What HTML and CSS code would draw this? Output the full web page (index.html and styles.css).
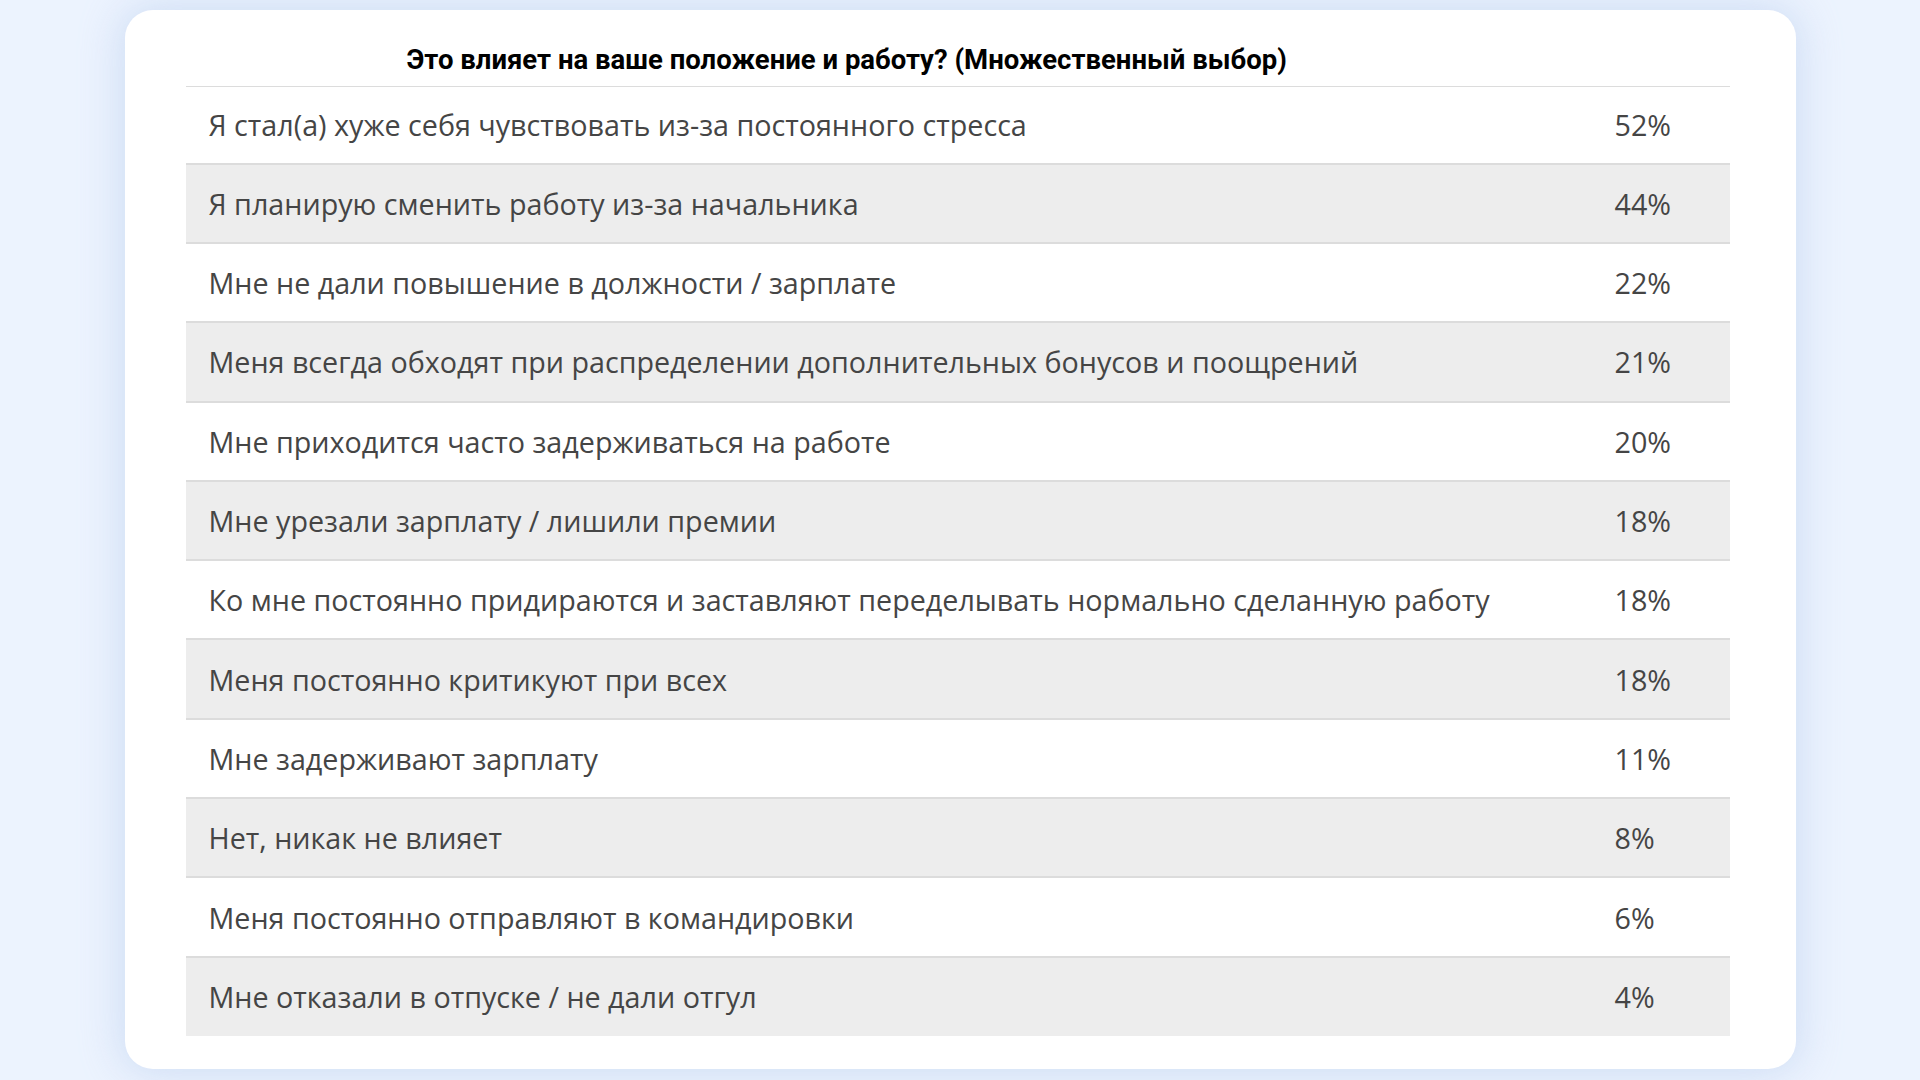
FILE: index.html
```html
<!DOCTYPE html>
<html lang="ru">
<head>
  <meta charset="UTF-8">
  <title>Опрос: влияние на работу</title>
  <link rel="stylesheet" href="styles.css">
</head>
<body>
  <div class="card">
    <table class="survey">
      <colgroup>
        <col class="col-label">
        <col class="col-pct">
      </colgroup>
      <thead>
        <tr>
          <th colspan="2">Это влияет на ваше положение и работу? (Множественный выбор)</th>
        </tr>
      </thead>
      <tbody>
        <tr><td>Я стал(а) хуже себя чувствовать из-за постоянного стресса</td><td>52%</td></tr>
        <tr><td>Я планирую сменить работу из-за начальника</td><td>44%</td></tr>
        <tr><td>Мне не дали повышение в должности / зарплате</td><td>22%</td></tr>
        <tr><td>Меня всегда обходят при распределении дополнительных бонусов и поощрений</td><td>21%</td></tr>
        <tr><td>Мне приходится часто задерживаться на работе</td><td>20%</td></tr>
        <tr><td>Мне урезали зарплату / лишили премии</td><td>18%</td></tr>
        <tr><td>Ко мне постоянно придираются и заставляют переделывать нормально сделанную работу</td><td>18%</td></tr>
        <tr><td>Меня постоянно критикуют при всех</td><td>18%</td></tr>
        <tr><td>Мне задерживают зарплату</td><td>11%</td></tr>
        <tr><td>Нет, никак не влияет</td><td>8%</td></tr>
        <tr><td>Меня постоянно отправляют в командировки</td><td>6%</td></tr>
        <tr><td>Мне отказали в отпуске / не дали отгул</td><td>4%</td></tr>
      </tbody>
    </table>
  </div>
</body>
</html>
```

FILE: styles.css
```css
:root {
  --bg: #ecf3fe;
  --row-alt: #ededed;
  --line: #dcdcdc;
  --text: #454545;
}
html, body { margin: 0; height: 100%; }
body {
  background: var(--bg);
  display: flex;
  justify-content: center;
  align-items: flex-start;
  padding-top: 10px;
  box-sizing: border-box;
  font-family: 'Open Sans', 'Noto Sans', sans-serif;
}
.card {
  width: 1671px;
  height: 1059px;
  box-sizing: border-box;
  background: #fff;
  border-radius: 28px;
  padding: 34px 66px 0 61px;
  box-shadow: 0 0 40px 4px rgba(170, 195, 232, 0.45);
}
.survey {
  width: 1544px;
  border-collapse: collapse;
  table-layout: fixed;
}
.col-label { width: 1406px; }
.col-pct { width: 138px; }
.survey th {
  font-family: Roboto, 'Liberation Sans', sans-serif;
  font-weight: 700;
  font-size: 27.5px;
  color: #000;
  text-align: left;
  padding: 0 0 10px 221px;
  line-height: 32px;
  border-bottom: 1px solid var(--line);
}
.survey td {
  height: 77.2px;
  box-sizing: border-box;
  padding: 0 0 0 23px;
  font-size: 28.7px;
  color: var(--text);
  vertical-align: middle;
  white-space: nowrap;
}
.survey tbody tr + tr td { border-top: 2px solid var(--line); height: 79.3px; }
.survey tbody tr:nth-child(even) td { background: var(--row-alt); }
```
